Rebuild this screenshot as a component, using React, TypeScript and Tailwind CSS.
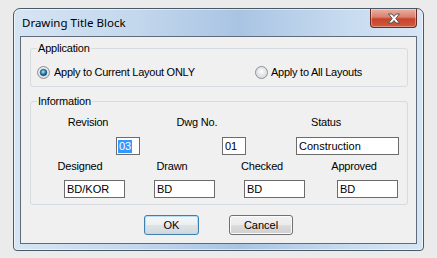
import React from 'react';

const font = { fontFamily: '"Liberation Sans", Arial, sans-serif' };

const RadioDot: React.FC<{ checked?: boolean }> = ({ checked }) => (
  <svg width="13" height="13" viewBox="0 0 13 13" className="shrink-0">
    <defs>
      <radialGradient id={checked ? 'rg-on' : 'rg-off'} cx="50%" cy="40%" r="60%">
        <stop offset="0%" stopColor="#ffffff" />
        <stop offset="100%" stopColor="#cfd1d3" />
      </radialGradient>
      <radialGradient id="dot" cx="45%" cy="40%" r="60%">
        <stop offset="0%" stopColor="#bfe6fb" />
        <stop offset="55%" stopColor="#2b87bd" />
        <stop offset="100%" stopColor="#0c3d5e" />
      </radialGradient>
    </defs>
    <circle cx="6.5" cy="6.5" r="6" fill={`url(#${checked ? 'rg-on' : 'rg-off'})`} stroke="#8d9196" strokeWidth="1" />
    <circle cx="6.5" cy="6.5" r="4.5" fill="none" stroke="#e6e7e8" strokeWidth="1" />
    {checked && <circle cx="6.5" cy="6.5" r="3.3" fill="url(#dot)" stroke="#164d72" strokeWidth="0.6" />}
  </svg>
);

const Field: React.FC<{ value: string; w: string; ml: string; selected?: boolean }> = ({ value, w, ml, selected }) => (
  <div className={`${w} ${ml} h-[18px] bg-white border border-[#6b6b6b] flex items-center pl-[1px] text-[11px] leading-[13px] text-black`}>
    {selected ? <span className="bg-[#3399ff] text-white px-[1px]">{value}</span> : <span className="pl-[1px]">{value}</span>}
  </div>
);

const Label: React.FC<{ text: string; ml: string }> = ({ text, ml }) => (
  <div className={`${ml} w-[80px] h-[13px] leading-[13px] text-center text-[11px] tracking-[-0.2px] text-black`}>{text}</div>
);

export default function App() {
  return (
    <div className="w-[437px] h-[258px] bg-[#ebebeb] pt-[8px] pl-[13px]" style={font}>
      {/* window frame */}
      <div className="w-[411px] h-[243px] flex flex-col px-[6px] pb-[6px] border border-[#4b5866] rounded-t-[7px] rounded-b-[4px] shadow-[inset_0_0_0_1px_rgba(255,255,255,0.55)] bg-[linear-gradient(90deg,#d6e5f4_0%,#c3d7ed_30%,#a9c4e3_55%,#c6daef_80%,#d7e6f5_100%)]">
        {/* title bar */}
        <div className="h-[27px] flex items-start justify-between">
          <div
            className="pl-[2px] h-[27px] flex items-center text-[11.5px] text-black"
            style={{ fontFamily: '"Noto Sans", "Open Sans", sans-serif' }}
          >
            Drawing Title Block
          </div>
          <div className="w-[47px] h-[19px] rounded-b-[4px] border border-t-0 border-[#6e2a20] bg-[linear-gradient(180deg,#eab1a4_0%,#d9806c_45%,#c7442c_55%,#cf5a3e_100%)] shadow-[inset_0_0_0_1px_rgba(255,255,255,0.35)] flex items-center justify-center">
            <svg width="14" height="11" viewBox="0 0 14 11">
              <path
                d="M1.5 1 H5 L7 3.5 L9 1 H12.5 L8.8 5.5 L12.5 10 H9 L7 7.5 L5 10 H1.5 L5.2 5.5 Z"
                fill="#ffffff"
                stroke="#4a4a4a"
                strokeWidth="0.9"
                strokeLinejoin="round"
              />
            </svg>
          </div>
        </div>

        {/* client area */}
        <div className="flex-1 bg-[#f0f0f0] border border-[#5f6b78] flex flex-col">
          <fieldset className="ml-[9px] mt-[5px] w-[378px] border border-[#d5dbe0] rounded-[3px]">
            <legend className="ml-[6px] px-[1px] text-[11px] leading-[13px] tracking-[-0.2px] text-black">Application</legend>
            <div className="pt-[11px] pb-[7px] flex items-center text-[11px] leading-[13px] tracking-[-0.25px] text-black">
              <div className="ml-[6px] w-[218px] flex items-center gap-[4px]">
                <RadioDot checked />
                <span>Apply to Current Layout ONLY</span>
              </div>
              <div className="flex items-center gap-[3px]">
                <RadioDot />
                <span>Apply to All Layouts</span>
              </div>
            </div>
          </fieldset>

          <fieldset className="ml-[9px] mt-[8px] w-[378px] border border-[#d5dbe0] rounded-[3px]">
            <legend className="ml-[6px] px-[1px] text-[11px] leading-[13px] tracking-[-0.2px] text-black">Information</legend>
            <div className="pt-[8px] pb-[6px] flex flex-col">
              <div className="flex">
                <Label text="Revision" ml="ml-[17px]" />
                <Label text="Dwg No." ml="ml-[29px]" />
                <Label text="Status" ml="ml-[49px]" />
              </div>
              <div className="flex mt-[8px]">
                <Field value="03" w="w-[24px]" ml="ml-[85px]" selected />
                <Field value="01" w="w-[24px]" ml="ml-[82px]" />
                <Field value="Construction" w="w-[103px]" ml="ml-[50px]" />
              </div>
              <div className="flex mt-[5px]">
                <Label text="Designed" ml="ml-[9px]" />
                <Label text="Drawn" ml="ml-[12px]" />
                <Label text="Checked" ml="ml-[10px]" />
                <Label text="Approved" ml="ml-[12px]" />
              </div>
              <div className="flex mt-[7px]">
                <Field value="BD/KOR" w="w-[61px]" ml="ml-[33px]" />
                <Field value="BD" w="w-[61px]" ml="ml-[29px]" />
                <Field value="BD" w="w-[61px]" ml="ml-[29px]" />
                <Field value="BD" w="w-[61px]" ml="ml-[32px]" />
              </div>
            </div>
          </fieldset>

          <div className="flex mt-[10px]">
            <button className="ml-[123px] w-[55px] h-[20px] rounded-[3px] border border-[#3c7fb1] shadow-[inset_0_0_0_1px_#b9dcf2] bg-[linear-gradient(180deg,#f4f7f9_0%,#eceff1_50%,#dfe3e6_50%,#d2d7db_100%)] text-[11px] text-black">
              OK
            </button>
            <button className="ml-[30px] w-[64px] h-[20px] rounded-[3px] border border-[#707070] shadow-[inset_0_0_0_1px_#fbfbfb] bg-[linear-gradient(180deg,#f2f2f2_0%,#ebebeb_50%,#dddddd_50%,#cfcfcf_100%)] text-[11px] text-black">
              Cancel
            </button>
          </div>
        </div>
      </div>
    </div>
  );
}
